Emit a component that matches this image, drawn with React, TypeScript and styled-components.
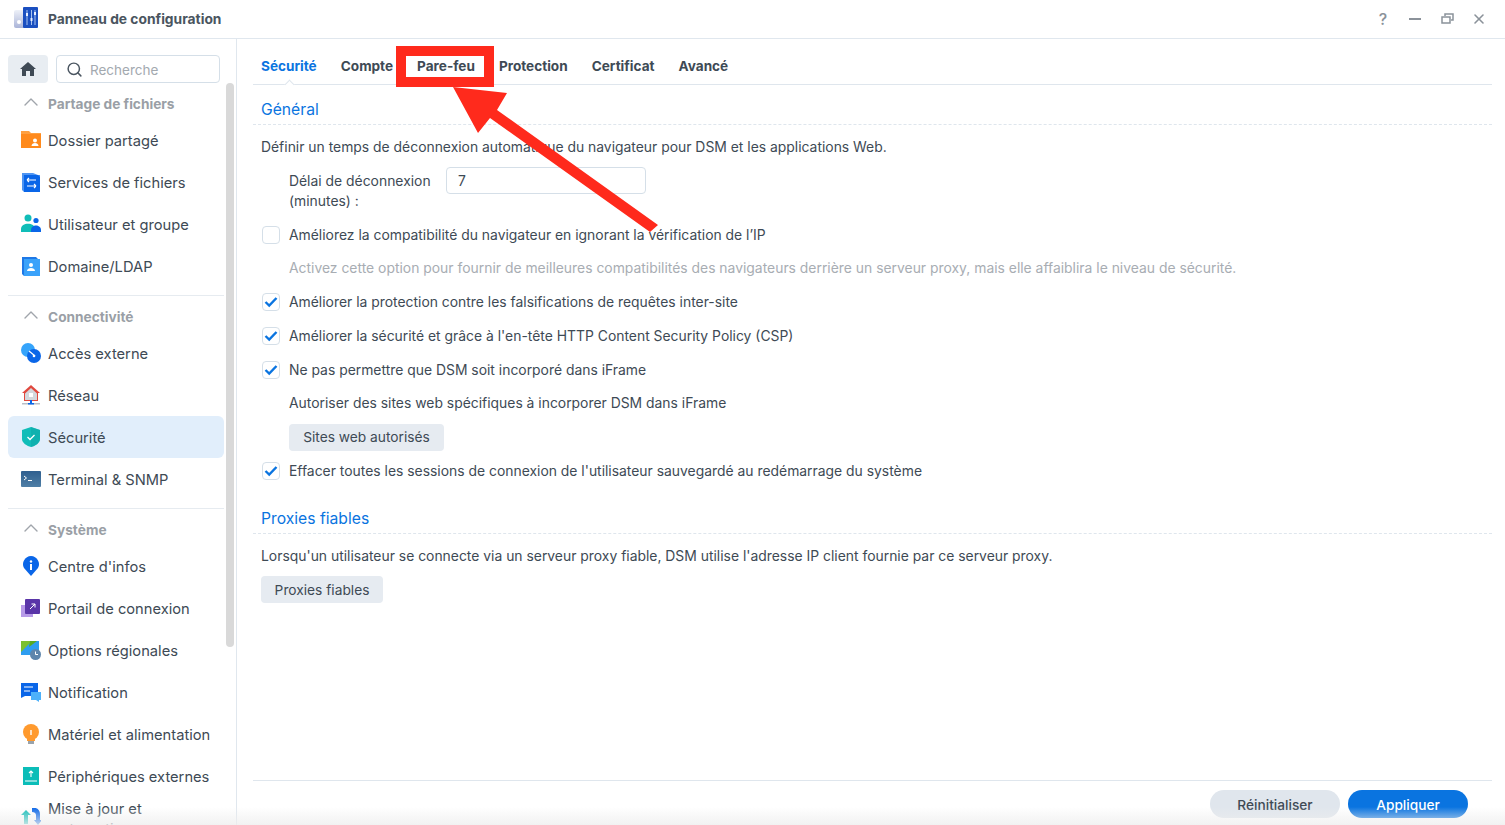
import React from 'react';
import styled, { createGlobalStyle } from 'styled-components';
import { ChevronUp, Search, X } from 'lucide-react';

const GlobalStyle = createGlobalStyle`
  html, body {
    margin: 0;
    height: 100%;
    overflow: hidden;
    background: #fff;
  }
  * { box-sizing: border-box; }
  body {
    font-family: Inter, "Noto Sans", "Liberation Sans", sans-serif;
    font-size: 13.9px;
    color: #3e4a55;
  }
`;

const Window = styled.div`
  position: relative;
  width: 1505px;
  height: 825px;
  display: flex;
  flex-direction: column;
  overflow: hidden;
  background: #fff;
`;

const TitleBar = styled.header`
  height: 39px;
  flex: none;
  display: flex;
  align-items: center;
  padding: 0 18px 1px 14px;
  border-bottom: 1px solid #e0e7ee;
`;

const AppName = styled.span`
  margin-left: 10px;
  font-size: 13.8px;
  font-weight: 700;
  color: #4a5560;
`;

const WindowControls = styled.div`
  margin-left: auto;
  display: flex;
  align-items: center;
  gap: 16px;
  color: #8b929a;
`;

const ControlSlot = styled.span`
  width: 16px;
  height: 16px;
  display: flex;
  align-items: center;
  justify-content: center;
  font-size: 16px;
  font-weight: 500;
`;

const Body = styled.div`
  flex: 1;
  min-height: 0;
  display: flex;
`;

const Sidebar = styled.aside`
  position: relative;
  width: 237px;
  flex: none;
  border-right: 1px solid #e0e7ee;
  padding: 16px 0 0 8px;
  overflow: hidden;
`;

const SearchRow = styled.div`
  display: flex;
  gap: 8px;
  height: 28px;
`;

const HomeButton = styled.button`
  width: 40px;
  height: 28px;
  border: 0;
  padding: 0;
  border-radius: 4px;
  background: #e8edf2;
  display: flex;
  align-items: center;
  justify-content: center;
`;

const SearchBox = styled.div`
  width: 164px;
  height: 28px;
  border: 1px solid #d5dfe8;
  border-radius: 4px;
  display: flex;
  align-items: center;
  padding: 1px 0 0 9px;
  gap: 7px;
  font-size: 13.5px;
  color: #a3a9af;
  svg { color: #4a5560; }
`;

const NavGroup = styled.section<{ $divided?: boolean }>`
  width: 216px;
  padding-bottom: 8px;
  border-bottom: ${(p) => (p.$divided ? '1px solid #e6ebf0' : '0')};
`;

const GroupHeader = styled.div`
  height: 36px;
  padding: 6px 0 0 11px;
  display: flex;
  align-items: center;
  gap: 5px;
  font-size: 13.7px;
  color: #9a9fa6;
  font-weight: 700;

  svg { margin-top: -4px; }
`;

const NavItem = styled.div<{ $active?: boolean }>`
  height: 42px;
  width: 216px;
  display: flex;
  align-items: center;
  padding-left: 13px;
  gap: 7px;
  border-radius: 6px;
  font-size: 14.7px;
  line-height: 20px;
  color: #3e4a55;
  background: ${(p) => (p.$active ? '#e1eefb' : 'transparent')};
`;

const NavLabel = styled.span`
  padding-top: 2px;
`;

const NavIcon = styled.svg`
  width: 20px;
  height: 20px;
  flex: none;
`;

const Scrollbar = styled.div`
  position: absolute;
  left: 226px;
  top: 44px;
  width: 8px;
  height: 564px;
  border-radius: 4px;
  background: #d9d9d9;
`;

const Main = styled.main`
  flex: 1;
  min-width: 0;
  display: flex;
  flex-direction: column;
  padding: 0 13px 0 16px;
`;

const Tabs = styled.nav`
  position: relative;
  height: 46px;
  flex: none;
  display: flex;
  align-items: center;
  gap: 24px;
  padding: 9px 0 0 8px;
  border-bottom: 1px solid #dfe6ed;
`;

const Tab = styled.span<{ $active?: boolean }>`
  font-size: 13.6px;
  font-weight: 700;
  color: ${(p) => (p.$active ? '#0a74e0' : '#3e4a55')};
`;

const TabNotch = styled.span`
  position: absolute;
  left: 33px;
  bottom: -4px;
  width: 7px;
  height: 7px;
  background: #fff;
  border-left: 1px solid #dfe6ed;
  border-top: 1px solid #dfe6ed;
  transform: rotate(45deg);
`;

const Content = styled.div`
  flex: 1;
  min-height: 0;
  padding: 0 8px;
`;

const SectionTitle = styled.h2<{ $height: number }>`
  margin: 0 -8px;
  padding: 0 8px 5px;
  height: ${(p) => p.$height}px;
  display: flex;
  align-items: flex-end;
  font-size: 15.7px;
  font-weight: 400;
  color: #0a74e0;
  border-bottom: 1px dashed #dfe6ed;
`;

const Line = styled.p<{ $muted?: boolean; $indent?: boolean; $height?: number; $after?: number }>`
  margin: 0 0 ${(p) => p.$after ?? 0}px;
  height: ${(p) => p.$height ?? 34}px;
  display: flex;
  align-items: center;
  padding-left: ${(p) => (p.$indent ? 28 : 0)}px;
  white-space: nowrap;
  color: ${(p) => (p.$muted ? '#a8adb3' : '#3e4a55')};
`;

const FieldRow = styled.div`
  display: flex;
  padding-left: 28px;
  height: 51px;
`;

const FieldLabel = styled.label`
  width: 157px;
  line-height: 20px;
  padding-top: 4px;
`;

const TextInput = styled.div`
  width: 200px;
  height: 27px;
  border: 1px solid #d5dfe8;
  border-radius: 4px;
  padding-left: 11px;
  display: flex;
  align-items: center;
`;

const CheckRow = styled.div`
  height: 34px;
  display: flex;
  align-items: center;
  gap: 9px;
  white-space: nowrap;
`;

const CheckBox = styled.span`
  width: 18px;
  height: 18px;
  margin: -1px 0 0 1px;
  border: 1px solid #d5dfe8;
  border-radius: 4px;
  display: flex;
  align-items: center;
  justify-content: center;
  flex: none;
`;

const SoftButton = styled.button<{ $indent?: boolean; $width: number }>`
  display: block;
  width: ${(p) => p.$width}px;
  height: 27px;
  margin-left: ${(p) => (p.$indent ? 28 : 0)}px;
  border: 0;
  border-radius: 4px;
  background: #e6ebf1;
  font: inherit;
  font-size: 13.75px;
  color: #3e4a55;
`;

const ButtonRow = styled.div`
  height: 34px;
  display: flex;
  align-items: center;
`;

const Footer = styled.footer`
  height: 45px;
  flex: none;
  border-top: 1px solid #dfe6ed;
  display: flex;
  justify-content: flex-end;
  gap: 8px;
  padding: 9px 24px 0 0;
`;

const Pill = styled.button<{ $primary?: boolean }>`
  width: ${(p) => (p.$primary ? 120 : 130)}px;
  height: 28px;
  padding: 1px 0 0;
  border: 0;
  border-radius: 14px;
  font: inherit;
  font-size: 13.7px;
  font-weight: 500;
  background: ${(p) => (p.$primary ? '#0a74e0' : '#e0e6ed')};
  color: ${(p) => (p.$primary ? '#fff' : '#3e4a55')};
`;

const BottomFade = styled.div`
  position: absolute;
  left: 0;
  right: 0;
  bottom: 0;
  height: 18px;
  background: linear-gradient(to bottom, rgba(238, 238, 238, 0), rgba(238, 238, 238, 0.8));
  pointer-events: none;
`;

const Highlight = styled.div`
  position: absolute;
  left: 396px;
  top: 46px;
  width: 98px;
  height: 41px;
  border: 10px solid #ff2a1c;
`;

const ArrowOverlay = styled.svg`
  position: absolute;
  left: 0;
  top: 0;
  width: 1505px;
  height: 825px;
  pointer-events: none;
`;

function AppLogo() {
  return (
    <svg width="24" height="24" viewBox="0 0 24 24">
      <defs>
        <linearGradient id="lg" x1="0" x2="0" y1="0" y2="1">
          <stop offset="0" stopColor="#eef1f8" />
          <stop offset="1" stopColor="#aab4d8" />
        </linearGradient>
      </defs>
      <rect x="0" y="3" width="11" height="18" rx="2" fill="url(#lg)" />
      <rect x="9" y="0" width="15" height="21" rx="1" fill="#1a4fc0" />
      <path d="M13 3v15M17.500 3v15M21 3v15" stroke="#a8c4f0" strokeWidth="1" />
      <rect x="12" y="6" width="2" height="3" fill="#e8f0ff" />
      <rect x="16.500" y="11" width="2" height="3" fill="#e8f0ff" />
      <rect x="20" y="5" width="2" height="3" fill="#e8f0ff" />
      <circle cx="5" cy="15" r="2" fill="#fff" />
    </svg>
  );
}

const icons: Record<string, React.ReactNode> = {
  folder: (
    <>
      <path d="M0 1h8l2 2h10v15H0z" fill="#ffa040" />
      <path d="M0 4h20v14H0z" fill="#ff8a1c" />
      <circle cx="14" cy="10.500" r="2" fill="#fff" />
      <path d="M10.500 16c0-4 7-4 7 0z" fill="#fff" />
    </>
  ),
  transfer: (
    <>
      <path d="M1 1h11l5 2h2v17H3l-2-2z" fill="#4d94f2" />
      <path d="M3 3h14l2 2v15H3z" fill="#0a66e8" />
      <path d="M6 8h9M6 8l2-2M6 8l2 2M15 14H6M15 14l-2-2M15 14l-2 2" stroke="#fff" strokeWidth="1.100" fill="none" />
    </>
  ),
  users: (
    <>
      <circle cx="7" cy="4" r="3.500" fill="#10bdb8" />
      <path d="M0 18v-3c0-7 14-7 14 0v3z" fill="#10bdb8" />
      <circle cx="15" cy="6.500" r="2.600" fill="#0a66e8" />
      <path d="M10 18v-2c0-6 10-6 10 0v2z" fill="#0a66e8" />
    </>
  ),
  domain: (
    <>
      <path d="M1 1h14l4 4v15H3l-2-2z" fill="#1e78e6" />
      <path d="M3 3h16v17H3z" fill="#3aa2fa" />
      <circle cx="10" cy="9" r="2" fill="#fff" />
      <path d="M6 15c0-4 8-4 8 0z" fill="#fff" />
    </>
  ),
  link: (
    <>
      <circle cx="7" cy="7" r="7" fill="#35a4fb" />
      <circle cx="13" cy="13" r="7" fill="#0a66e8" />
      <path d="M8 8l6 5" stroke="#fff" strokeWidth="1.200" />
      <circle cx="13" cy="13" r="1.300" fill="#fff" />
    </>
  ),
  network: (
    <>
      <path d="M10 0L19 8h-2v8H3V8H1z" fill="#e0483e" />
      <path d="M10 3l6 5.500V15H4V8.500z" fill="#d4d8dd" />
      <rect x="8" y="8" width="4" height="4" fill="#fff" />
      <rect x="1" y="18" width="18" height="1.500" fill="#b8bfc7" />
      <rect x="9" y="15" width="2" height="4" fill="#0a66e8" />
      <rect x="7" y="18" width="6" height="1.500" fill="#0a66e8" />
    </>
  ),
  shield: (
    <>
      <path d="M1 3L10 0l9 3v9c0 4-5 7-9 8-4-1-9-4-9-8z" fill="#10bdb8" />
      <path d="M10 0l9 3v9c0 4-5 7-9 8z" fill="#0fa8a8" opacity="0.6" />
      <path d="M6.500 10l2.500 2.500 4.500-4.500" stroke="#fff" strokeWidth="1.300" fill="none" />
    </>
  ),
  terminal: (
    <>
      <defs>
        <linearGradient id="tg" x1="0" x2="0" y1="0" y2="1">
          <stop offset="0" stopColor="#2f5f8f" />
          <stop offset="1" stopColor="#4f7fa6" />
        </linearGradient>
      </defs>
      <rect x="0" y="2" width="20" height="16" rx="1" fill="url(#tg)" />
      <path d="M3 7l2.500 2L3 11M7 11.500h4" stroke="#fff" strokeWidth="1" fill="none" />
    </>
  ),
  info: (
    <>
      <path d="M10 20L3 12C0 7 4 0 10 0s10 7 7 12z" fill="#0a66e8" />
      <rect x="9" y="8" width="2" height="6" fill="#fff" />
      <circle cx="10" cy="5.500" r="1.200" fill="#fff" />
    </>
  ),
  portal: (
    <>
      <rect x="0" y="7" width="12" height="12" fill="#b79ae8" />
      <rect x="4" y="1" width="15" height="15" rx="1" fill="#5a35a8" />
      <path d="M9 11l5-5M10.500 6H14v3.500" stroke="#fff" strokeWidth="1" fill="none" />
    </>
  ),
  region: (
    <>
      <path d="M0 1h18v14H0z" fill="#2e9df0" />
      <path d="M0 1h11L0 12z" fill="#7ac02f" />
      <path d="M9 1h7L8 7z" fill="#5aaa20" />
      <circle cx="14.500" cy="14.500" r="5.500" fill="#5e86ac" />
      <path d="M14.500 11.500v3h2.500" stroke="#fff" strokeWidth="1" fill="none" />
    </>
  ),
  bell: (
    <>
      <path d="M0 1h17v13H4l-4 2z" fill="#0a66e8" />
      <path d="M3 5h9M3 9h6" stroke="#fff" strokeWidth="1.200" />
      <path d="M10 10h10v8h-2v2l-3-2h-5z" fill="#4db1fa" />
    </>
  ),
  bulb: (
    <>
      <circle cx="10" cy="8" r="8" fill="#ff9a2e" />
      <path d="M6 14h8v3H6z" fill="#ff9a2e" />
      <rect x="7" y="17" width="6" height="3" fill="#9aa3ab" />
      <rect x="9.300" y="6" width="1.400" height="5" fill="#fff" />
    </>
  ),
  external: (
    <>
      <rect x="2" y="1" width="16" height="18" fill="#0bbdb8" />
      <path d="M10 11V5M8 7l2-2 2 2M4 15h12" stroke="#fff" strokeWidth="1.100" fill="none" />
    </>
  ),
  update: (
    <>
      <path d="M5 2l5 5H7v9H3V7H0z" fill="#10bdb8" />
      <path d="M11 0c5-1 8 2 8 6v6h2l-4 5-4-5h2V7c0-2-2-3-4-3z" fill="#0a66e8" />
    </>
  ),
};

type Item = { label: string; icon: string; active?: boolean };

const groups: { title: string; divided: boolean; items: Item[] }[] = [
  {
    title: 'Partage de fichiers',
    divided: true,
    items: [
      { label: 'Dossier partagé', icon: 'folder' },
      { label: 'Services de fichiers', icon: 'transfer' },
      { label: 'Utilisateur et groupe', icon: 'users' },
      { label: 'Domaine/LDAP', icon: 'domain' },
    ],
  },
  {
    title: 'Connectivité',
    divided: true,
    items: [
      { label: 'Accès externe', icon: 'link' },
      { label: 'Réseau', icon: 'network' },
      { label: 'Sécurité', icon: 'shield', active: true },
      { label: 'Terminal & SNMP', icon: 'terminal' },
    ],
  },
  {
    title: 'Système',
    divided: false,
    items: [
      { label: "Centre d'infos", icon: 'info' },
      { label: 'Portail de connexion', icon: 'portal' },
      { label: 'Options régionales', icon: 'region' },
      { label: 'Notification', icon: 'bell' },
      { label: 'Matériel et alimentation', icon: 'bulb' },
      { label: 'Périphériques externes', icon: 'external' },
      { label: 'Mise à jour et restauration', icon: 'update' },
    ],
  },
];

const tabs = ['Sécurité', 'Compte', 'Pare-feu', 'Protection', 'Certificat', 'Avancé'];

function Check({ checked, children }: { checked?: boolean; children: React.ReactNode }) {
  return (
    <CheckRow>
      <CheckBox>
        {checked && (
          <svg width="14" height="12" viewBox="0 0 14 12">
            <path d="M1.500 6l3.700 3.500L12.500 2" stroke="#0a74e0" strokeWidth="2.400" fill="none" />
          </svg>
        )}
      </CheckBox>
      {children}
    </CheckRow>
  );
}

export default function App() {
  return (
    <Window>
      <GlobalStyle />
      <TitleBar>
        <AppLogo />
        <AppName>Panneau de configuration</AppName>
        <WindowControls>
          <ControlSlot>?</ControlSlot>
          <ControlSlot>
            <svg width="12" height="2" viewBox="0 0 12 2">
              <rect width="12" height="2" fill="#8b929a" />
            </svg>
          </ControlSlot>
          <ControlSlot>
            <svg width="13" height="11" viewBox="0 0 13 11">
              <path d="M1 4h8v6H1zM4 3V1h8v6h-2" fill="none" stroke="#8b929a" strokeWidth="1.500" />
            </svg>
          </ControlSlot>
          <ControlSlot>
            <X size={16} strokeWidth={2.400} />
          </ControlSlot>
        </WindowControls>
      </TitleBar>
      <Body>
        <Sidebar>
          <SearchRow>
            <HomeButton>
              <svg width="16" height="14" viewBox="0 0 16 14">
                <path d="M8 0L0 7h2v7h4V9h4v5h4V7h2z" fill="#3f4a55" />
              </svg>
            </HomeButton>
            <SearchBox>
              <Search size={17} strokeWidth={2.100} />
              Recherche
            </SearchBox>
          </SearchRow>
          {groups.map((group) => (
            <NavGroup key={group.title} $divided={group.divided}>
              <GroupHeader>
                <ChevronUp size={24} strokeWidth={1.400} color="#a0a5ab" />
                {group.title}
              </GroupHeader>
              {group.items.map((item) => (
                <NavItem key={item.label} $active={item.active}>
                  <NavIcon viewBox="0 0 20 20">{icons[item.icon]}</NavIcon>
                  <NavLabel>{item.label}</NavLabel>
                </NavItem>
              ))}
            </NavGroup>
          ))}
          <Scrollbar />
        </Sidebar>
        <Main>
          <Tabs>
            {tabs.map((tab, i) => (
              <Tab key={tab} $active={i === 0}>
                {tab}
              </Tab>
            ))}
            <TabNotch />
          </Tabs>
          <Content>
            <SectionTitle $height={40}>Général</SectionTitle>
            <Line $height={44} $after={-2}>Définir un temps de déconnexion automatique du navigateur pour DSM et les applications Web.</Line>
            <FieldRow>
              <FieldLabel>
                Délai de déconnexion
                <br />
                (minutes) :
              </FieldLabel>
              <TextInput>7</TextInput>
            </FieldRow>
            <Check>Améliorez la compatibilité du navigateur en ignorant la vérification de l’IP</Check>
            <Line $muted $indent $height={32} $after={1}>
              Activez cette option pour fournir de meilleures compatibilités des navigateurs derrière un serveur proxy, mais elle affaiblira le niveau de sécurité.
            </Line>
            <Check checked>Améliorer la protection contre les falsifications de requêtes inter-site</Check>
            <Check checked>Améliorer la sécurité et grâce à l'en-tête HTTP Content Security Policy (CSP)</Check>
            <Check checked>Ne pas permettre que DSM soit incorporé dans iFrame</Check>
            <Line $indent $height={32} $after={1}>Autoriser des sites web spécifiques à incorporer DSM dans iFrame</Line>
            <ButtonRow>
              <SoftButton $indent $width={155}>Sites web autorisés</SoftButton>
            </ButtonRow>
            <Check checked>Effacer toutes les sessions de connexion de l'utilisateur sauvegardé au redémarrage du système</Check>
            <SectionTitle $height={46}>Proxies fiables</SectionTitle>
            <Line $height={44} $after={-2}>Lorsqu'un utilisateur se connecte via un serveur proxy fiable, DSM utilise l'adresse IP client fournie par ce serveur proxy.</Line>
            <SoftButton $width={122}>Proxies fiables</SoftButton>
          </Content>
          <Footer>
            <Pill>Réinitialiser</Pill>
            <Pill $primary>Appliquer</Pill>
          </Footer>
        </Main>
      </Body>
      <BottomFade />
      <Highlight />
      <ArrowOverlay viewBox="0 0 1505 825">
        <path d="M453 87L507 93L497 110L658 225L650 232L490 118L478 133Z" fill="#ff2a1c" />
      </ArrowOverlay>
    </Window>
  );
}
